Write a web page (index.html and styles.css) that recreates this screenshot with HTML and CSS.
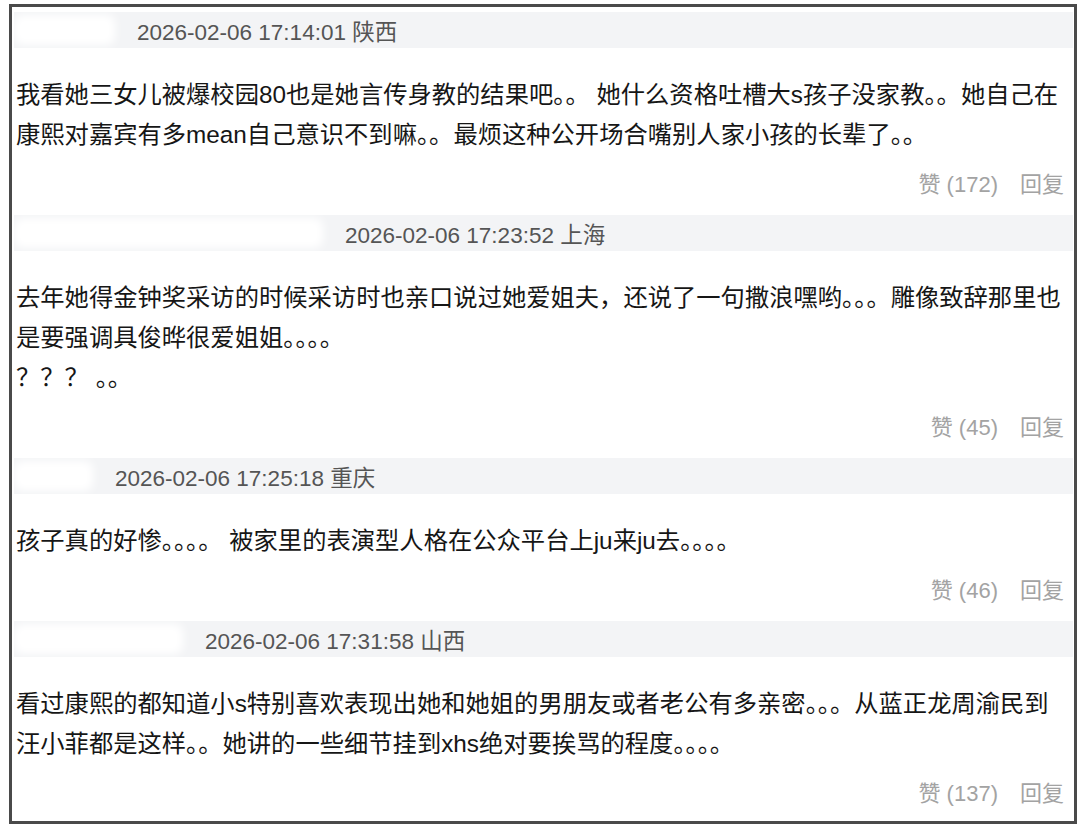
FILE: index.html
```html
<!DOCTYPE html>
<html lang="zh-CN">
<head>
    <meta charset="UTF-8">
    <meta name="viewport" content="width=device-width, initial-scale=1.0">
    <title>评论</title>
    <link rel="stylesheet" href="styles.css">
</head>
<body>

    <div class="frame">

        <div class="comment">
            <div class="comment-head">
                <span class="name-blur name-1"></span>
                <span class="meta">2026-02-06 17:14:01 陕西</span>
            </div>
            <p class="comment-text">我看她三女儿被爆校园80也是她言传身教的结果吧。。 她什么资格吐槽大s孩子没家教。。她自己在康熙对嘉宾有多mean自己意识不到嘛。。最烦这种公开场合嘴别人家小孩的长辈了。。</p>
            <div class="comment-actions">
                <span>赞 (172)</span>
                <span>回复</span>
            </div>
        </div>

        <div class="comment">
            <div class="comment-head">
                <span class="name-blur name-2"></span>
                <span class="meta">2026-02-06 17:23:52 上海</span>
            </div>
            <p class="comment-text">去年她得金钟奖采访的时候采访时也亲口说过她爱姐夫，还说了一句撒浪嘿哟。。。雕像致辞那里也是要强调具俊晔很爱姐姐。。。。<br>？？？ 。。</p>
            <div class="comment-actions">
                <span>赞 (45)</span>
                <span>回复</span>
            </div>
        </div>

        <div class="comment">
            <div class="comment-head">
                <span class="name-blur name-3"></span>
                <span class="meta">2026-02-06 17:25:18 重庆</span>
            </div>
            <p class="comment-text">孩子真的好惨。。。。 被家里的表演型人格在公众平台上ju来ju去。。。。</p>
            <div class="comment-actions">
                <span>赞 (46)</span>
                <span>回复</span>
            </div>
        </div>

        <div class="comment">
            <div class="comment-head">
                <span class="name-blur name-4"></span>
                <span class="meta">2026-02-06 17:31:58 山西</span>
            </div>
            <p class="comment-text">看过康熙的都知道小s特别喜欢表现出她和她姐的男朋友或者老公有多亲密。。。从蓝正龙周渝民到汪小菲都是这样。。她讲的一些细节挂到xhs绝对要挨骂的程度。。。。</p>
            <div class="comment-actions">
                <span>赞 (137)</span>
                <span>回复</span>
            </div>
        </div>

    </div>

</body>
</html>
```

FILE: styles.css
```css
body {
    margin: 0;
    padding: 0;
    background-color: #ffffff;
    font-family: 'Liberation Sans', 'Noto Sans CJK SC', sans-serif;
}

.frame {
    box-sizing: border-box;
    width: 1068px;
    height: 820px;
    margin: 4px 0 0 9px;
    padding: 5px 1px 0 2px;
    border: 3px solid #4a4a4a;
    background-color: #fff;
    overflow: hidden;
}

.comment {
    padding-bottom: 15px;
}

.comment-head {
    display: flex;
    align-items: center;
    height: 36px;
    background-color: #f3f4f6;
}

.name-blur {
    height: 30px;
    background-color: #fff;
    border-radius: 8px;
    filter: blur(4px);
    margin-right: 22px;
}

.name-1 { width: 101px; }
.name-2 { width: 309px; }
.name-3 { width: 79px; }
.name-4 { width: 169px; }

.meta {
    font-size: 22.5px;
    color: #555;
}

.comment-text {
    margin: 27px 0 0 0;
    padding: 0 8px 0 2px;
    font-size: 24.3px;
    line-height: 40px;
    color: #161616;
}

.comment-actions {
    display: flex;
    justify-content: flex-end;
    align-items: center;
    gap: 22px;
    height: 36px;
    margin-top: 9px;
    padding-right: 9px;
    font-size: 22px;
    color: #a3a3a3;
}
```
